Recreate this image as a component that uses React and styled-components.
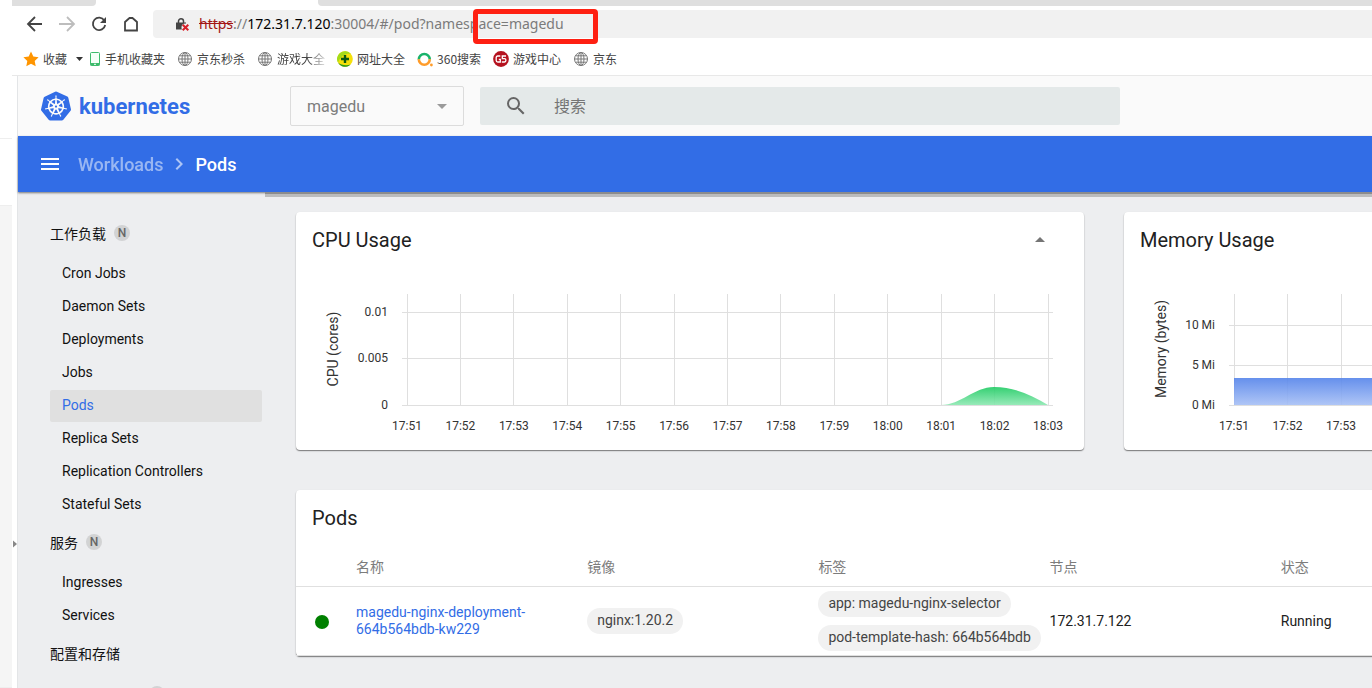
import React from "react";
import styled, { createGlobalStyle, css } from "styled-components";
import { SiKubernetes } from "react-icons/si";
import { MdSearch, MdMenu, MdArrowDropDown, MdArrowDropUp, MdChevronRight } from "react-icons/md";

const uiFont = '"Noto Sans CJK SC", sans-serif';
const addressFont = '"Noto Sans", "Noto Sans CJK SC", sans-serif';
const appFont = 'Roboto, "Noto Sans CJK SC", sans-serif';
const blue = "#326de6";

const GlobalStyle = createGlobalStyle`
  *, *::before, *::after { box-sizing: border-box; }
  body { margin: 0; background: #fff; font-family: ${appFont}; font-size: 14px; color: #212121; }
  button, input, select { font: inherit; color: inherit; border: 0; margin: 0; padding: 0; background: none; outline: none; }
  a { color: inherit; text-decoration: none; }
  svg { display: block; flex: none; }
`;

const Screen = styled.div`
  display: flex;
  height: 100vh;
  overflow: hidden;
`;

const SidePanel = styled.div`
  flex: none;
  width: 12px;
  display: flex;
  flex-direction: column;
`;

const PanelBlock = styled.div`
  height: ${(p) => p.$height};
  flex: ${(p) => (p.$height ? "none" : 1)};
  background: ${(p) => p.$bg || "#fff"};
  border-bottom: 1px solid #eee;
`;

const Browser = styled.div`
  flex: 1;
  min-width: 0;
  display: flex;
  flex-direction: column;
`;

const TabStrip = styled.div`
  flex: none;
  height: 6px;
  display: flex;
  justify-content: space-between;
  gap: 222px;
`;

const Tab = styled.div`
  flex: ${(p) => (p.$wide ? 1 : "0 0 84px")};
  background: #dfdfdf;
  border-radius: ${(p) => (p.$wide ? "0 0 0 4px" : "0 0 4px 0")};
`;

const NavBar = styled.div`
  flex: none;
  position: relative;
  height: 36px;
  display: flex;
  align-items: center;
  padding-left: 7px;
`;

const NavButton = styled.button`
  width: 32px;
  height: 28px;
  display: flex;
  align-items: center;
  justify-content: center;
  color: ${(p) => (p.disabled ? "#bdbdbd" : "#444")};
`;

const AddressBar = styled.label`
  flex: 1;
  min-width: 0;
  height: 28px;
  margin-left: 6px;
  padding-left: 22px;
  display: flex;
  align-items: center;
  background: #f1f1f1;
  border-radius: 4px 0 0 4px;
  font: 14px/28px ${addressFont};
  color: #7b7b7b;
`;

const Scheme = styled.span`
  margin-left: 9px;
  color: #a31515;
  text-decoration: line-through;
`;

const Host = styled.span`
  color: #000;
`;

const PathInput = styled.input`
  flex: 1;
  min-width: 0;
`;

const Highlight = styled.div`
  position: absolute;
  left: 461px;
  top: 3px;
  width: 125px;
  height: 35px;
  border: 5px solid #fe2012;
  border-radius: 4px;
`;

const Bookmarks = styled.nav`
  flex: none;
  height: 34px;
  display: flex;
  align-items: center;
  padding-left: 5px;
  border-bottom: 1px solid #e8e8e8;
  font: 12px/20px ${uiFont};
  color: #444;
  white-space: nowrap;
`;

const Bookmark = styled.a`
  display: flex;
  align-items: center;
  gap: 4px;
  padding: 0 6px;
  ${(p) =>
    p.$faded &&
    css`
      mask-image: linear-gradient(to right, #000 70%, transparent);
    `}
`;

const FolderButton = styled.button`
  width: 10px;
  height: 20px;
  display: flex;
  align-items: center;
  justify-content: flex-end;
`;

const Viewport = styled.div`
  flex: 1;
  min-height: 0;
  display: flex;
`;

const Splitter = styled.div`
  flex: none;
  width: 6px;
  padding: 464px 0 0 1px;
  border-right: 1px solid #e3e5e7;
`;

const Dashboard = styled.div`
  flex: 1;
  min-width: 0;
  display: flex;
  flex-direction: column;
  background: #edeef0;
`;

const Header = styled.header`
  flex: none;
  height: 60px;
  display: flex;
  align-items: center;
  padding: 0 16px 0 23px;
  background: #fafafa;
`;

const Brand = styled.a`
  flex: none;
  width: 249px;
  display: flex;
  align-items: center;
  gap: 8px;
  color: ${blue};
  font-size: 22px;
  font-weight: 700;
`;

const NamespaceBox = styled.div`
  flex: none;
  position: relative;
  width: 174px;
  height: 40px;
  border: 1px solid #dcdcdc;
  border-radius: 2px;
  color: #9a9a9a;

  svg {
    position: absolute;
    right: 9px;
    top: 7px;
    pointer-events: none;
  }
`;

const NamespaceSelect = styled.select`
  appearance: none;
  width: 100%;
  height: 100%;
  padding-left: 16px;
  font-size: 16px;
  color: #7c7c7c;
`;

const SearchBox = styled.label`
  flex: 0 1 640px;
  min-width: 0;
  height: 38px;
  margin-left: 16px;
  padding-left: 24px;
  display: flex;
  align-items: center;
  gap: 26px;
  background: #e4e9e9;
  border-radius: 2px;
  color: #666;
`;

const SearchInput = styled.input`
  flex: 1;
  min-width: 0;
  font-size: 16px;

  &::placeholder {
    color: #757575;
    opacity: 1;
  }
`;

const ActionBar = styled.div`
  flex: none;
  position: relative;
  height: 56px;
  display: flex;
  align-items: center;
  padding-left: 20px;
  background: ${blue};
  box-shadow: 0 1px 2px rgba(0, 0, 0, 0.5);
  color: #fff;
  font-size: 18px;
  font-weight: 500;
`;

const MenuButton = styled.button`
  margin-right: 16px;
`;

const Crumb = styled.a`
  opacity: ${(p) => (p.$current ? 1 : 0.5)};
`;

const CrumbArrow = styled.span`
  margin: 0 4px;
  opacity: 0.6;
`;

const Body = styled.div`
  flex: 1;
  min-height: 0;
  display: flex;
`;

const Sidebar = styled.nav`
  flex: none;
  width: 247px;
  padding: 20px 3px 0 32px;
  overflow: hidden;
`;

const GroupTitle = styled.a`
  display: flex;
  align-items: center;
  gap: 8px;
  height: 45px;
  padding-bottom: 3px;
  color: #111;
`;

const Badge = styled.span`
  width: 16px;
  height: 16px;
  border-radius: 8px;
  background: #d2d3d4;
  color: #666;
  font-size: 12px;
  line-height: 17px;
  font-weight: 500;
  text-align: center;
`;

const NavItem = styled.a`
  display: flex;
  align-items: center;
  gap: 8px;
  height: 32px;
  margin-top: 1px;
  padding: 0 0 ${(p) => (p.$badged ? 0 : "2px")} 12px;
  border-radius: 2px;
  background: ${(p) => (p.$active ? "#e0e0e0" : "transparent")};
  color: ${(p) => (p.$active ? blue : "#111")};
`;

const Main = styled.main`
  flex: 1;
  min-width: 0;
  overflow: hidden;
  position: relative;
`;

const TopStrip = styled.div`
  height: 5px;
  background: #bbbcbd;
  border-top: 2px solid #8c8c8d;
`;

const Cards = styled.div`
  display: grid;
  grid-template-columns: repeat(2, minmax(788px, 1fr));
  gap: 40px;
  padding: 15px 31px;
`;

const Card = styled.section`
  grid-column: ${(p) => (p.$full ? "1 / -1" : "auto")};
  background: #fff;
  border-radius: 4px;
  box-shadow: 0 1px 1px rgba(0, 0, 0, 0.4), 0 1px 2px rgba(0, 0, 0, 0.15);
`;

const CardHeader = styled.div`
  height: 56px;
  padding: 0 32px 0 16px;
  display: flex;
  align-items: center;
  justify-content: space-between;
`;

const CardTitle = styled.h2`
  margin: 0;
  font-size: 20px;
  font-weight: 400;
`;

const CollapseButton = styled.button`
  color: #757575;
`;

const Chart = styled.svg`
  font-size: 12px;
  fill: #333;

  .grid { stroke: #dfdfdf; stroke-width: 1; shape-rendering: crispEdges; }
  .axis { font-size: 14px; }
`;

const Table = styled.table`
  width: 100%;
  table-layout: fixed;
  border-collapse: separate;
  border-spacing: 0;
`;

const Th = styled.th`
  width: ${(p) => p.$width};
  height: 41px;
  padding: 0;
  border-bottom: 1px solid #e0e0e0;
  text-align: left;
  font-weight: 400;
  color: #7c7c7c;
`;

const Td = styled.td`
  height: 69px;
  padding: ${(p) => (p.$status ? "2px 0 0 19px" : "4px 0")};
  border-bottom: 1px solid #e0e0e0;
  vertical-align: middle;
  line-height: 17px;
`;

const StatusDot = styled.span`
  display: block;
  width: 14px;
  height: 14px;
  border-radius: 7px;
  background: #008000;
`;

const PodLink = styled.a`
  display: block;
  width: 180px;
  color: ${blue};
`;

const ChipList = styled.div`
  display: flex;
  flex-direction: column;
  align-items: flex-start;
  gap: 8px;
`;

const Chip = styled.span`
  height: 26px;
  padding: 0 10px;
  border-radius: 13px;
  background: #f1f1f1;
  color: #444;
  line-height: 25px;
  white-space: nowrap;
`;

const Globe = () => (
  <svg width="16" height="16" viewBox="0 0 16 16" fill="none" stroke="#777">
    <circle cx="8" cy="8" r="6.5" />
    <ellipse cx="8" cy="8" rx="3" ry="6.5" />
    <path d="M1.5 8h13M2.5 4.8h11M2.5 11.2h11M8 1.5v13" />
  </svg>
);

const Star = () => (
  <svg width="16" height="16" viewBox="0 0 16 16" fill="#ff9500">
    <path d="M8 .6l2.3 4.9 5.3.7-3.9 3.7 1 5.4L8 12.700l-4.700 2.600 1-5.400L.4 6.200l5.300-.7z" />
  </svg>
);

const Phone = () => (
  <svg width="12" height="16" viewBox="0 0 12 16">
    <rect x="1.500" y="1.500" width="9" height="13" rx="1" fill="#f4fff8" stroke="#3dbb6c" />
    <path d="M1.500 12h9v2.500h-9z" fill="#3dbb6c" />
    <path d="M5 13.300h2" stroke="#fff" />
  </svg>
);

const GreenBall = () => (
  <svg width="16" height="16" viewBox="0 0 16 16">
    <circle cx="8" cy="8" r="7.800" fill="#f5e00a" />
    <path d="M3 2a7.800 7.800 0 0 1 11 1C10 2 4 4 1 11.500A7.800 7.800 0 0 1 3 2z" fill="#a4dc1a" />
    <path d="M1 11.500A7.800 7.800 0 0 0 13.500 13.500C9 15 4 14 1 11.500z" fill="#2f9a1c" />
    <path d="M8 4v8M4 8h8" stroke="#0b5a12" strokeWidth="2.400" />
  </svg>
);

const Ring360 = () => (
  <svg width="16" height="16" viewBox="0 0 16 16" fill="none" strokeWidth="2.600">
    <path d="M1.800 8.500a5.500 5.500 0 0 1 11 0" stroke="#19b36b" />
    <path d="M1.800 8.300a5.500 5.500 0 0 0 11 0" stroke="#ff9c2a" />
    <circle cx="14.400" cy="14" r="1.400" fill="#ff9c2a" />
  </svg>
);

const GameBadge = () => (
  <svg width="16" height="16" viewBox="0 0 16 16" fill="none" stroke="#fff" strokeWidth="1.300">
    <circle cx="8" cy="8" r="7.900" fill="#b5121f" stroke="none" />
    <path d="M7.300 5H4.800Q3.200 5 3.200 6.500v3q0 1.500 1.600 1.500h2.500V8.300H5.800M13 5H9.300v2.700h2.200q1.400 0 1.400 1.600T11.500 11H8.800" />
  </svg>
);

const LockError = () => (
  <svg width="15" height="15" viewBox="0 0 15 15" fill="none">
    <path d="M3.500 6V4.200a2.500 2.500 0 0 1 5 0V6" stroke="#444" strokeWidth="1.500" />
    <path d="M1 5.500h10v7H1z" fill="#444" />
    <circle cx="10.500" cy="10.500" r="4" fill="#f1f1f1" />
    <path d="M7.700 7.700l5.600 5.600M13.300 7.700l-5.600 5.600" stroke="#d8202a" strokeWidth="2" />
  </svg>
);

const NavIcon = ({ d, fill }) => (
  <svg width="18" height="18" viewBox="0 0 18 18" fill="none" stroke="currentColor" strokeWidth="1.800">
    <path d={d} />
    {fill && <path d={fill} fill="currentColor" stroke="none" />}
  </svg>
);

const bookmarks = [
  { label: "手机收藏夹", Icon: Phone },
  { label: "京东秒杀", Icon: Globe },
  { label: "游戏大全", Icon: Globe, faded: true },
  { label: "网址大全", Icon: GreenBall },
  { label: "360搜索", Icon: Ring360 },
  { label: "游戏中心", Icon: GameBadge },
  { label: "京东", Icon: Globe },
];

const groups = [
  {
    title: "工作负载",
    badge: true,
    items: ["Cron Jobs", "Daemon Sets", "Deployments", "Jobs", "Pods", "Replica Sets", "Replication Controllers", "Stateful Sets"],
  },
  { title: "服务", badge: true, items: ["Ingresses", "Services"] },
  { title: "配置和存储", items: ["Config Maps"] },
];

const namespacedItems = ["Config Maps"];

const times = ["17:51", "17:52", "17:53", "17:54", "17:55", "17:56", "17:57", "17:58", "17:59", "18:00", "18:01", "18:02", "18:03"];
const base = 137;

function UsageCard({ title, axis, ticks, area, colors, id, left }) {
  const right = 752;
  const xs = times.map((_, i) => left + ((right - left) * i) / (times.length - 1));
  return (
    <Card>
      <CardHeader>
        <CardTitle>{title}</CardTitle>
        <CollapseButton aria-label={`Collapse ${title}`}>
          <MdArrowDropUp size={24} />
        </CollapseButton>
      </CardHeader>
      <Chart width="100%" height="182" viewBox="0 0 788 182" preserveAspectRatio="xMinYMin meet">
        <defs>
          <linearGradient id={id} x1="0" y1="0" x2="0" y2="1">
            <stop offset="0" stopColor={colors[0]} />
            <stop offset="1" stopColor={colors[1]} />
          </linearGradient>
        </defs>
        {xs.map((x, i) => (
          <g key={times[i]}>
            <line className="grid" x1={x} x2={x} y1="26" y2={base} />
            <text x={x} y="162" textAnchor="middle">{times[i]}</text>
          </g>
        ))}
        {ticks.map(([label, y]) => (
          <g key={label}>
            <line className="grid" x1={left - 5} x2="757" y1={y} y2={y} />
            <text x={left - 19} y={y + 4} textAnchor="end">{label}</text>
          </g>
        ))}
        <text className="axis" transform="translate(42 81) rotate(-90)" textAnchor="middle">{axis}</text>
        <path d={area} fill={`url(#${id})`} fillOpacity="0.9" />
      </Chart>
    </Card>
  );
}

export default function App() {
  return (
    <>
      <GlobalStyle />
      <Screen>
        <SidePanel>
          <PanelBlock $height="139px" />
          <PanelBlock $height="67px" />
          <PanelBlock $bg="#f5f5f5" />
        </SidePanel>
        <Browser>
          <TabStrip>
            <Tab />
            <Tab $wide />
          </TabStrip>
          <NavBar>
            <NavButton aria-label="Back"><NavIcon d="M16 9H2M9 2L2 9l7 7" /></NavButton>
            <NavButton aria-label="Forward" disabled><NavIcon d="M1 9h14M9 2l7 7-7 7" /></NavButton>
            <NavButton aria-label="Reload">
              <NavIcon d="M14.300 5.500A6.200 6.200 0 1 0 15.200 10" fill="M16 2v6h-6z" />
            </NavButton>
            <NavButton aria-label="Home"><NavIcon d="M3 15.500V7l4.500-4h3L15 7v8.500z" /></NavButton>
            <AddressBar>
              <LockError />
              <Scheme>https</Scheme>
              <span>://</span>
              <Host>172.31.7.120</Host>
              <PathInput aria-label="Address" defaultValue=":30004/#/pod?namespace=magedu" />
            </AddressBar>
            <Highlight />
          </NavBar>
          <Bookmarks>
            <Bookmark href="#favorites"><Star />收藏</Bookmark>
            <FolderButton aria-label="More favorites">
              <svg width="7" height="4" viewBox="0 0 7 4" fill="#333"><path d="M0 0h7L3.500 4z" /></svg>
            </FolderButton>
            {bookmarks.map(({ label, Icon, faded }) => (
              <Bookmark key={label} href="#bookmark" $faded={faded}><Icon />{label}</Bookmark>
            ))}
          </Bookmarks>
          <Viewport>
            <Splitter>
              <svg width="4" height="8" viewBox="0 0 4 8" fill="#888"><path d="M0 0.500L4 4 0 7.500z" /></svg>
            </Splitter>
            <Dashboard>
              <Header>
                <Brand href="#/"><SiKubernetes size={30} />kubernetes</Brand>
                <NamespaceBox>
                  <NamespaceSelect aria-label="Namespace" defaultValue="magedu">
                    <option>magedu</option>
                  </NamespaceSelect>
                  <MdArrowDropDown size={24} />
                </NamespaceBox>
                <SearchBox>
                  <MdSearch size={24} />
                  <SearchInput aria-label="搜索" placeholder="搜索" />
                </SearchBox>
              </Header>
              <ActionBar>
                <MenuButton aria-label="Menu"><MdMenu size={24} /></MenuButton>
                <Crumb href="#/workloads">Workloads</Crumb>
                <CrumbArrow><MdChevronRight size={24} /></CrumbArrow>
                <Crumb href="#/pod" $current>Pods</Crumb>
              </ActionBar>
              <Body>
                <Sidebar>
                  {groups.map((group) => (
                    <React.Fragment key={group.title}>
                      <GroupTitle href="#/group">
                        {group.title}
                        {group.badge && <Badge>N</Badge>}
                      </GroupTitle>
                      {group.items.map((item) => {
                        const badged = namespacedItems.includes(item);
                        return (
                          <NavItem key={item} href="#/item" $active={item === "Pods"} $badged={badged}>
                            {item}
                            {badged && <Badge>N</Badge>}
                          </NavItem>
                        );
                      })}
                    </React.Fragment>
                  ))}
                </Sidebar>
                <Main>
                  <TopStrip />
                  <Cards>
                    <UsageCard
                      id="cpu"
                      title="CPU Usage"
                      axis="CPU (cores)"
                      left={111}
                      ticks={[["0.01", 44], ["0.005", 90], ["0", base]]}
                      area={`M645 ${base}C665 ${base} 678 119 698 119S735 127 752 ${base}z`}
                      colors={["#1fcb63", "#8ce8b1"]}
                    />
                    <UsageCard
                      id="memory"
                      title="Memory Usage"
                      axis="Memory (bytes)"
                      left={110}
                      ticks={[["10 Mi", 57], ["5 Mi", 97], ["0 Mi", base]]}
                      area={`M110 ${base}V110H752V${base}z`}
                      colors={["#5584ea", "#a6bff5"]}
                    />
                    <Card $full>
                      <CardHeader><CardTitle>Pods</CardTitle></CardHeader>
                      <Table>
                        <thead>
                          <tr>
                            <Th $width="60px" />
                            <Th>名称</Th>
                            <Th>镜像</Th>
                            <Th>标签</Th>
                            <Th>节点</Th>
                            <Th>状态</Th>
                            <Th $width="400px" />
                          </tr>
                        </thead>
                        <tbody>
                          <tr>
                            <Td $status><StatusDot /></Td>
                            <Td><PodLink href="#/pod/detail">magedu-nginx-deployment-664b564bdb-kw229</PodLink></Td>
                            <Td><ChipList><Chip>nginx:1.20.2</Chip></ChipList></Td>
                            <Td>
                              <ChipList>
                                <Chip>app: magedu-nginx-selector</Chip>
                                <Chip>pod-template-hash: 664b564bdb</Chip>
                              </ChipList>
                            </Td>
                            <Td>172.31.7.122</Td>
                            <Td>Running</Td>
                            <Td />
                          </tr>
                        </tbody>
                      </Table>
                    </Card>
                  </Cards>
                </Main>
              </Body>
            </Dashboard>
          </Viewport>
        </Browser>
      </Screen>
    </>
  );
}
